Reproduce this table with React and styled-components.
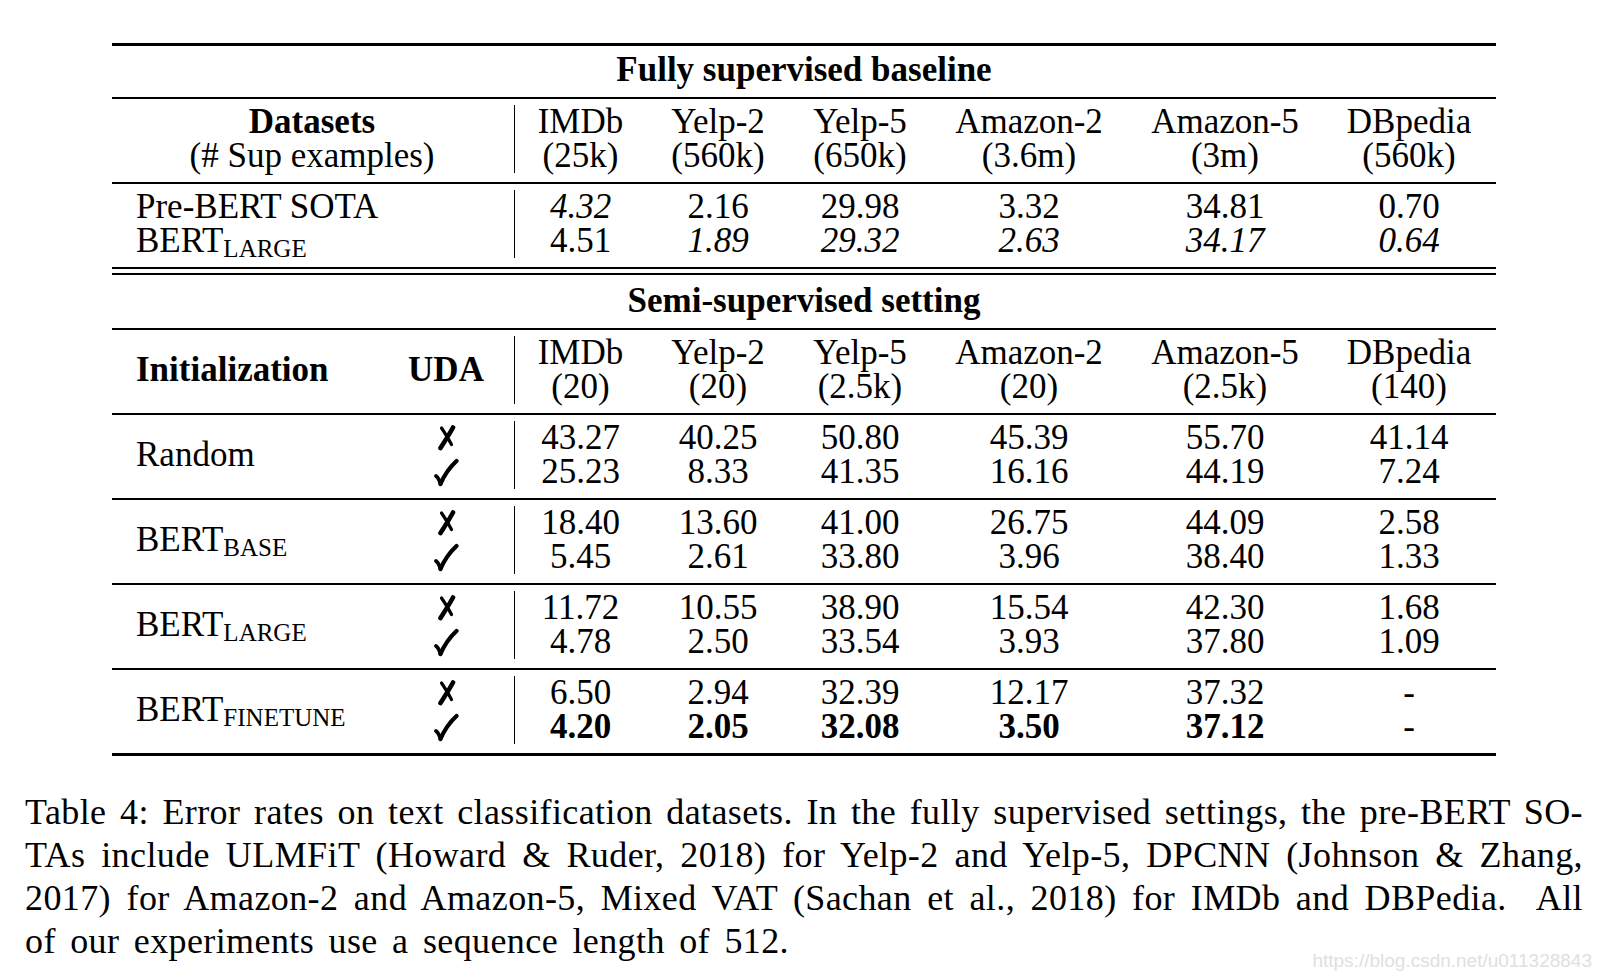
import React from 'react'
import styled, { createGlobalStyle } from 'styled-components'

const GlobalStyle = createGlobalStyle`
  html, body {
    margin: 0;
    padding: 0;
    background: #fff;
    overflow: hidden;
  }
  body {
    font-family: 'Liberation Serif', 'Times New Roman', serif;
    color: #000;
  }
`

const COLS = '288px 114px 132px 144px 140px 198px 194px 174px'

const Page = styled.div`
  position: relative;
  width: 1602px;
  height: 980px;
  padding-top: 43px;
  box-sizing: border-box;
`

const Table = styled.div`
  margin-left: 112px;
  width: 1384px;
  font-size: 35px;
  line-height: 34px;
`

const Rule = styled.div`
  height: ${p => (p.$heavy ? 3 : 2)}px;
  background: #000;
`

const DoubleRule = styled.div`
  display: flex;
  flex-direction: column;
  gap: 4px;
`

const TitleBar = styled.div`
  padding: ${p => p.$pad};
  text-align: center;
  font-weight: 700;
`

const Block = styled.div`
  display: grid;
  grid-template-columns: ${COLS};
  padding: 6px 0 9px;
`

const Label = styled.div`
  padding-left: 24px;
  align-self: ${p => (p.$center ? 'center' : 'start')};
  font-weight: ${p => (p.$bold ? 700 : 400)};
`

const Heading = styled.div`
  grid-column: span 2;
  text-align: center;
  padding-right: 2px;
`

const Uda = styled.div`
  padding-right: 22px;
  display: flex;
  flex-direction: column;
  align-items: center;
  justify-content: center;
  font-weight: 700;
`

const Mark = styled.div`
  height: 34px;
  display: flex;
  align-items: center;
  justify-content: center;
`

const Col = styled.div`
  text-align: center;
  border-left: ${p => (p.$first ? '1.5px solid #000' : 'none')};
`

const Val = styled.div`
  font-style: ${p => (p.$it ? 'italic' : 'normal')};
  font-weight: ${p => (p.$bold ? 700 : 400)};
`

const Sub = styled.span`
  font-size: 25px;
  vertical-align: -5px;
  line-height: 0;
`

const Caption = styled.div`
  margin: 35px 0 0 25px;
  width: 1558px;
  font-size: 36px;
  letter-spacing: 0.4px;
  line-height: 43px;
`

const Line = styled.div`
  white-space: nowrap;
  text-align: justify;
  text-align-last: ${p => (p.$last ? 'left' : 'justify')};
  word-spacing: ${p => (p.$last ? '5px' : '0')};
`

const Watermark = styled.div`
  position: absolute;
  right: 10px;
  top: 950px;
  font-family: 'Liberation Sans Narrow', 'Liberation Sans', Arial, sans-serif;
  font-size: 19px;
  color: #e0e0e0;
`

const Cross = () => (
  <svg width="19" height="26" viewBox="0 0 19 26" fill="none" stroke="#000" strokeLinecap="round">
    <path d="M16 2.5 C 12.5 9, 8 16, 3.5 23" strokeWidth="4.6" />
    <path d="M4.5 3 C 8 8, 11.5 14, 14.5 19.5" strokeWidth="3.2" />
  </svg>
)

const Check = () => (
  <svg width="26" height="29" viewBox="0 0 26 29" fill="none" stroke="#000" strokeLinecap="round" strokeLinejoin="round">
    <path d="M3 18 C 5 19.5, 6.5 22.5, 7.5 26" strokeWidth="3.8" />
    <path d="M7.5 26 C 11.5 16.5, 16.5 9.5, 23.5 3" strokeWidth="4.2" />
  </svg>
)

const HEAD_FULL = [
  ['IMDb', '(25k)'],
  ['Yelp-2', '(560k)'],
  ['Yelp-5', '(650k)'],
  ['Amazon-2', '(3.6m)'],
  ['Amazon-5', '(3m)'],
  ['DBpedia', '(560k)'],
]

const HEAD_SEMI = [
  ['IMDb', '(20)'],
  ['Yelp-2', '(20)'],
  ['Yelp-5', '(2.5k)'],
  ['Amazon-2', '(20)'],
  ['Amazon-5', '(2.5k)'],
  ['DBpedia', '(140)'],
]

// "_" marks an italic number, "*" a bold one
const FULL_ROWS = [
  ['_4.32', '2.16', '29.98', '3.32', '34.81', '0.70'],
  ['4.51', '_1.89', '_29.32', '_2.63', '_34.17', '_0.64'],
]

const SEMI = [
  {
    name: 'Random',
    rows: [
      ['43.27', '40.25', '50.80', '45.39', '55.70', '41.14'],
      ['25.23', '8.33', '41.35', '16.16', '44.19', '7.24'],
    ],
  },
  {
    name: 'BERT',
    sub: 'BASE',
    rows: [
      ['18.40', '13.60', '41.00', '26.75', '44.09', '2.58'],
      ['5.45', '2.61', '33.80', '3.96', '38.40', '1.33'],
    ],
  },
  {
    name: 'BERT',
    sub: 'LARGE',
    rows: [
      ['11.72', '10.55', '38.90', '15.54', '42.30', '1.68'],
      ['4.78', '2.50', '33.54', '3.93', '37.80', '1.09'],
    ],
  },
  {
    name: 'BERT',
    sub: 'FINETUNE',
    rows: [
      ['6.50', '2.94', '32.39', '12.17', '37.32', '-'],
      ['*4.20', '*2.05', '*32.08', '*3.50', '*37.12', '-'],
    ],
  },
]

const Num = ({ v }) => {
  if (v[0] === '_') return <Val $it>{v.slice(1)}</Val>
  if (v[0] === '*') return <Val $bold>{v.slice(1)}</Val>
  return <Val>{v}</Val>
}

const HeadCols = ({ heads }) =>
  heads.map((h, i) => (
    <Col key={h[0]} $first={i === 0}>
      <div>{h[0]}</div>
      <div>{h[1]}</div>
    </Col>
  ))

const DataCols = ({ rows }) =>
  rows[0].map((_, j) => (
    <Col key={j} $first={j === 0}>
      {rows.map((r, k) => (
        <Num key={k} v={r[j]} />
      ))}
    </Col>
  ))

function App () {
  return (
    <Page>
      <GlobalStyle />
      <Table>
        <Rule $heavy />
        <TitleBar $pad="7px 0 10px">Fully supervised baseline</TitleBar>
        <Rule />
        <Block>
          <Heading>
            <div style={{ fontWeight: 700 }}>Datasets</div>
            <div>(# Sup examples)</div>
          </Heading>
          <HeadCols heads={HEAD_FULL} />
        </Block>
        <Rule />
        <Block>
          <Label>
            <div>Pre-BERT SOTA</div>
            <div>BERT<Sub>LARGE</Sub></div>
          </Label>
          <div />
          <DataCols rows={FULL_ROWS} />
        </Block>
        <DoubleRule>
          <Rule />
          <Rule />
        </DoubleRule>
        <TitleBar $pad="9px 0 10px">Semi-supervised setting</TitleBar>
        <Rule />
        <Block>
          <Label $center $bold>Initialization</Label>
          <Uda>UDA</Uda>
          <HeadCols heads={HEAD_SEMI} />
        </Block>
        {SEMI.map((g, i) => (
          <React.Fragment key={i}>
            <Rule />
            <Block>
              <Label $center>
                {g.name}
                {g.sub && <Sub>{g.sub}</Sub>}
              </Label>
              <Uda>
                <Mark><Cross /></Mark>
                <Mark><Check /></Mark>
              </Uda>
              <DataCols rows={g.rows} />
            </Block>
          </React.Fragment>
        ))}
        <Rule $heavy />
      </Table>
      <Caption>
        <Line>Table 4: Error rates on text classification datasets. In the fully supervised settings, the pre-BERT SO-</Line>
        <Line>TAs include ULMFiT (Howard &amp; Ruder, 2018) for Yelp-2 and Yelp-5, DPCNN (Johnson &amp; Zhang,</Line>
        <Line>2017) for Amazon-2 and Amazon-5, Mixed VAT (Sachan et al., 2018) for IMDb and DBPedia.&nbsp; All</Line>
        <Line $last>of our experiments use a sequence length of 512.</Line>
      </Caption>
      <Watermark>https://blog.csdn.net/u011328843</Watermark>
    </Page>
  )
}

export default App
